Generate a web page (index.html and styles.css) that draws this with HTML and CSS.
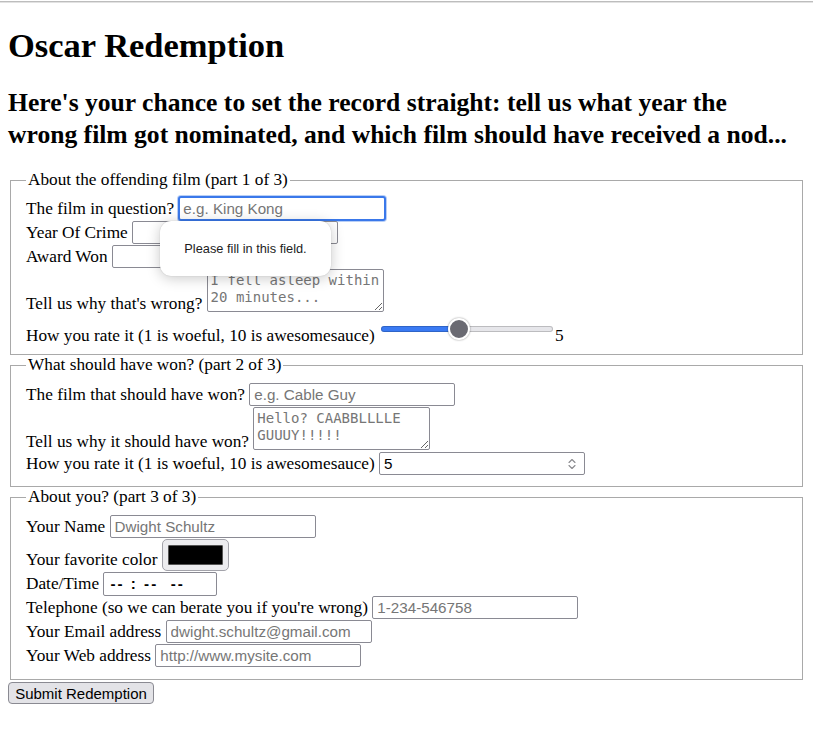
FILE: index.html
```html
<!DOCTYPE html>
<html lang="en">
<head>
<meta charset="utf-8">
<title>Oscar Redemption</title>
<link rel="stylesheet" href="styles.css">
</head>
<body>
<div class="topline"></div>
<div class="page">
  <h1>Oscar Redemption</h1>
  <h2>Here's your chance to set the record straight: tell us what year the wrong film got nominated, and which film should have received a nod...</h2>
  <form>
    <fieldset class="fs1">
      <legend>About the offending film (part 1 of 3)</legend>
      <div class="row first"><label for="film">The film in question?</label> <input class="txt focused" id="film" type="text" placeholder="e.g. King Kong"></div>
      <div class="row"><label for="year">Year Of Crime</label> <input class="txt" id="year" type="text"></div>
      <div class="row"><label for="award">Award Won</label> <input class="txt" id="award" type="text"></div>
      <div class="row"><label for="why1">Tell us why that's wrong?</label> <textarea id="why1" class="area" placeholder="I fell asleep within 20 minutes..."></textarea></div>
      <div class="row rate"><label for="rate1">How you rate it (1 is woeful, 10 is awesomesauce)</label> <input id="rate1" class="range" type="range" min="1" max="10" value="5"><output class="val">5</output></div>
    </fieldset>
    <fieldset class="fs2">
      <legend>What should have won? (part 2 of 3)</legend>
      <div class="row"><label for="film2">The film that should have won?</label> <input class="txt" id="film2" type="text" placeholder="e.g. Cable Guy"></div>
      <div class="row"><label for="why2">Tell us why it should have won?</label> <textarea id="why2" class="area" placeholder="Hello? CAABBLLLLE GUUUY!!!!!"></textarea></div>
      <div class="row"><label for="rate2">How you rate it (1 is woeful, 10 is awesomesauce)</label> <span class="num"><input id="rate2" type="number" min="1" max="10" value="5"><svg class="spin" width="10" height="16" viewBox="0 0 10 16"><path d="M2 6.5 L5 3.5 L8 6.5 M2 9.5 L5 12.5 L8 9.5" fill="none" stroke="#8a8a8e" stroke-width="1.1" stroke-linecap="round" stroke-linejoin="round"/></svg></span></div>
    </fieldset>
    <fieldset>
      <legend>About you? (part 3 of 3)</legend>
      <div class="row"><label for="name">Your Name</label> <input class="txt" id="name" type="text" placeholder="Dwight Schultz"></div>
      <div class="row colorrow"><label for="color">Your favorite color</label> <input class="color" id="color" type="color" value="#000000"></div>
      <div class="row"><label for="time">Date/Time</label> <span class="time" id="time" role="textbox">-- : --  --</span></div>
      <div class="row"><label for="tel">Telephone (so we can berate you if you're wrong)</label> <input class="txt" id="tel" type="tel" placeholder="1-234-546758"></div>
      <div class="row"><label for="email">Your Email address</label> <input class="txt" id="email" type="email" placeholder="dwight.schultz@gmail.com"></div>
      <div class="row"><label for="web">Your Web address</label> <input class="txt" id="web" type="url" placeholder="http://www.mysite.com"></div>
    </fieldset>
    <button class="submit" type="submit">Submit Redemption</button>
  </form>
</div>
<div class="bubble">Please fill in this field.</div>
</body>
</html>
```
FILE: styles.css
```css
html, body {
  margin: 0;
  padding: 0;
  background: #fff;
}
body {
  position: relative;
  font-family: "Liberation Serif", "Times New Roman", serif;
  font-size: 17.25px;
  color: #000;
}
.topline {
  height: 1px;
  margin-top: 1px;
  background: #bdbdbd;
  border-bottom: 1px solid #e2e2e2;
}
.page {
  padding: 0 8px 8px 8px;
}
h1 {
  font-size: 34.5px;
  line-height: 40px;
  margin: 22px 0 0 0;
  font-weight: bold;
}
h2 {
  font-size: 25.6px;
  line-height: 32px;
  margin: 22px 5px 19px 0;
  font-weight: bold;
}
form {
  margin: 0;
}
fieldset {
  margin: 0 2px;
  padding: 8px 15px 11px 15px;
  border: 1px solid #a9a9a9;
  min-inline-size: min-content;
}
fieldset.fs1 {
  padding-top: 6px;
  padding-bottom: 7px;
}
fieldset.fs2 {
  padding-bottom: 10px;
}
legend {
  padding: 0 2px;
}
.row {
  line-height: 20px;
  min-height: 24px;
}
.txt {
  font-family: "Liberation Sans", Arial, sans-serif;
  font-size: 15.2px;
  width: 206px;
  height: 23px;
  box-sizing: border-box;
  border: 1px solid #8a8a93;
  border-radius: 2px;
  padding: 1px 4px;
  margin: 0;
  color: #000;
  background: #fff;
  outline: none;
}
.txt::placeholder, .area::placeholder {
  color: #767676;
}
.txt.focused {
  width: 208px;
  height: 25px;
  border: 2px solid #3a78ea;
  border-radius: 3px;
  box-shadow: 0 0 0 1px #b9cff6;
  padding: 1px 3px;
}
.area {
  font-family: "DejaVu Sans Mono", "Liberation Mono", monospace;
  font-size: 14px;
  line-height: 17px;
  width: 177px;
  height: 43px;
  box-sizing: border-box;
  border: 1px solid #8a8a93;
  border-radius: 2px;
  padding: 2px 3px;
  margin: 0;
  vertical-align: -3px;
  resize: both;
}
.rate {
  line-height: 22px;
  padding-top: 4px;
}
.range {
  -webkit-appearance: none;
  appearance: none;
  width: 172px;
  height: 22px;
  margin: 0 2px 0 2px;
  padding: 0;
  background: transparent;
  vertical-align: 1px;
}
.range::-webkit-slider-runnable-track {
  height: 6px;
  border-radius: 3px;
  background: linear-gradient(to right, #3a7af3 0, #3a7af3 44%, #e6e6ea 44%, #e6e6ea 100%);
  box-shadow: inset 0 0 0 1px rgba(0,0,0,0.18);
}
.range::-webkit-slider-thumb {
  -webkit-appearance: none;
  appearance: none;
  width: 22px;
  height: 22px;
  border-radius: 50%;
  background: #6a6a72;
  border: 2px solid #fff;
  box-sizing: border-box;
  box-shadow: 0 0 2px rgba(0,0,0,0.45);
  margin-top: -8px;
}
.val {
  font-size: 17.25px;
}
.num {
  display: inline-flex;
  align-items: center;
  width: 206px;
  height: 23px;
  box-sizing: border-box;
  border: 1px solid #8a8a93;
  border-radius: 2px;
  background: #fff;
  vertical-align: baseline;
}
.num input {
  flex: 1;
  min-width: 0;
  border: none;
  outline: none;
  padding: 0 4px;
  margin: 0;
  font-family: "Liberation Sans", Arial, sans-serif;
  font-size: 15.2px;
  background: transparent;
  -moz-appearance: textfield;
}
.num input::-webkit-inner-spin-button,
.num input::-webkit-outer-spin-button {
  -webkit-appearance: none;
  margin: 0;
}
.spin {
  margin-right: 7px;
  flex: none;
}
.colorrow {
  padding: 0 0 1px 0;
}
.color {
  -webkit-appearance: none;
  appearance: none;
  width: 67px;
  height: 32px;
  box-sizing: border-box;
  padding: 0;
  margin: 0;
  border: 1px solid #a3a3aa;
  border-radius: 5px;
  background: #ececef;
  vertical-align: 0;
}
.color::-webkit-color-swatch-wrapper {
  padding: 5px;
}
.color::-webkit-color-swatch {
  border: 1px solid #555;
  border-radius: 1px;
}
.time {
  display: inline-block;
  width: 114px;
  height: 24px;
  box-sizing: border-box;
  border: 1px solid #8a8a93;
  border-radius: 2px;
  padding: 0 6px;
  font-family: "Liberation Sans", Arial, sans-serif;
  font-size: 15.2px;
  font-weight: bold;
  letter-spacing: 2px;
  line-height: 22px;
  vertical-align: baseline;
  white-space: pre;
}
.submit {
  font-family: "Liberation Sans", Arial, sans-serif;
  font-size: 15px;
  height: 22px;
  width: 146px;
  padding: 0 6px;
  margin: 2px 0 0 0;
  border: 1px solid #8a8a92;
  border-radius: 4px;
  background: #e3e3e7;
  color: #000;
}
.bubble {
  position: absolute;
  left: 160px;
  top: 221px;
  width: 171px;
  height: 55px;
  box-sizing: border-box;
  background: #fff;
  border-radius: 11px;
  box-shadow: 0 2px 14px rgba(0,0,0,0.22), 0 0 1px rgba(0,0,0,0.25);
  font-family: "Liberation Sans", Arial, sans-serif;
  font-size: 12.8px;
  color: #1d1d1d;
  display: flex;
  align-items: center;
  justify-content: center;
}
```
